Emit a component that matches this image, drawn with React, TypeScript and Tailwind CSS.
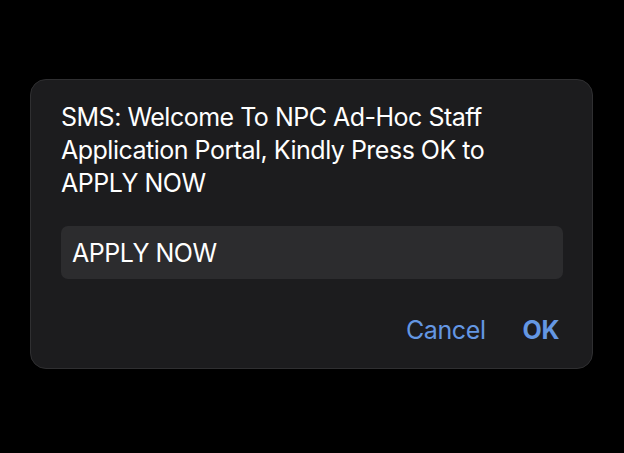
export default function App() {
  return (
    <div className="w-[624px] h-[453px] bg-black pt-[79px] pl-[30px]" style={{ fontFamily: "Inter, 'Noto Sans', sans-serif" }}>
      <div className="w-[563px] h-[290px] rounded-[16px] bg-[#1c1c1e] border border-[#2f2f31] pl-[30px] pr-[29px] pt-[21px]">
        <p className="text-[25px] leading-[33px] text-white tracking-[-0.5px]">
          SMS: Welcome To NPC Ad-Hoc Staff Application Portal, Kindly Press OK to APPLY NOW
        </p>
        <div className="mt-[26px] h-[53px] rounded-[7px] bg-[#2c2c2e] flex items-center pl-[11px] pt-[3px] text-[25px] tracking-[-0.5px] text-white">
          APPLY NOW
        </div>
        <div className="mt-[33px] flex justify-end items-center gap-[37px] pr-[4px] text-[25px] tracking-[-0.4px] text-[#6497e3]">
          <span>Cancel</span>
          <span className="font-bold">OK</span>
        </div>
      </div>
    </div>
  );
}
